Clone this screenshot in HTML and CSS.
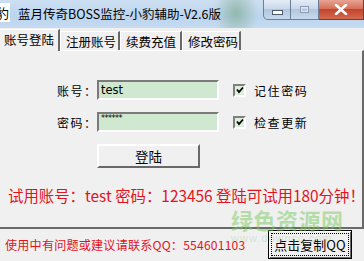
FILE: index.html
```
<!DOCTYPE html>
<html>
<head>
    <title>蓝月传奇BOSS监控-小豹辅助-V2.6版</title>
    <link rel="stylesheet" href="styles.css">
</head>
<body>
    <div class="window">
        <div class="titlebar">
            <span class="app-icon">豹</span>
            <span class="title">蓝月传奇BOSS监控-小豹辅助-V2.6版</span>
            <div class="caption">
                <span class="cap cap-min"><i></i></span>
                <span class="cap cap-max"><i></i></span>
                <span class="cap cap-close">
                    <svg width="14" height="11" viewBox="0 0 14 11"><path d="M2 1 L12 10 M12 1 L2 10" stroke="#fff" stroke-width="2.6" stroke-linecap="round"/></svg>
                </span>
            </div>
        </div>

        <div class="tabs">
            <div class="tab active">账号登陆</div>
            <div class="tab">注册账号</div>
            <div class="tab">续费充值</div>
            <div class="tab">修改密码</div>
        </div>

        <div class="panel">
            <div class="row">
                <span class="label">账号：</span>
                <div class="field">test</div>
                <span class="check"><svg width="8" height="8" viewBox="0 0 8 8"><path d="M1 3.5 L3 6 L7 1.5" fill="none" stroke="#000" stroke-width="1.8"/></svg></span>
                <span class="check-label">记住密码</span>
            </div>
            <div class="row">
                <span class="label">密码：</span>
                <div class="field field-pass">******</div>
                <span class="check"><svg width="8" height="8" viewBox="0 0 8 8"><path d="M1 3.5 L3 6 L7 1.5" fill="none" stroke="#000" stroke-width="1.8"/></svg></span>
                <span class="check-label">检查更新</span>
            </div>
            <button class="btn login">登陆</button>
            <p class="trial">试用账号：test 密码：123456 登陆可试用180分钟！</p>
        </div>

        <div class="footer">
            <span class="contact">使用中有问题或建议请联系QQ：554601103</span>
            <button class="btn copy"><span>点击复制QQ</span></button>
        </div>

        <div class="watermark">绿色资源网<small>www.downcc.com</small></div>
    </div>
</body>
</html>
```

FILE: styles.css
```
:root {
    --face: #f0f0f0;
    --shadow: #a0a0a0;
    --dark: #696969;
    --red: #e3131b;
    --cjk: "Noto Sans CJK SC", "Noto Sans", sans-serif;
}

body {
    margin: 0;
    background: var(--face);
    font-family: var(--cjk);
    color: #000;
}

.window {
    position: relative;
    width: 364px;
    height: 261px;
    overflow: hidden;
    background: var(--face);
}

/* title bar */

.titlebar {
    height: 28px;
    display: flex;
    align-items: flex-start;
    background:
        radial-gradient(ellipse 22px 30px at 236px 12px, rgba(110, 160, 120, 0.55), transparent),
        linear-gradient(#cddff2, #bcd4ee 60%, #c6dbf1);
}

.app-icon {
    width: 10px;
    height: 19px;
    margin-top: 3px;
    background: #fff;
    overflow: hidden;
    font-size: 13px;
    line-height: 19px;
    text-indent: -4px;
}

.title {
    margin-left: 8px;
    margin-top: 5px;
    font-size: 12.5px;
    line-height: 18px;
}

.caption {
    margin-left: auto;
    display: flex;
}

.cap {
    height: 19px;
    display: flex;
    align-items: center;
    justify-content: center;
    border: 1px solid #6d7f98;
    border-top: none;
    background: linear-gradient(#e4ecf6, #c9d8ea 45%, #b3c6dc 50%, #c8d9ec);
}

.cap-min {
    width: 26px;
    border-radius: 0 0 0 5px;
}

.cap-min i {
    width: 9px;
    height: 3px;
    margin-top: 6px;
    background: #fff;
    border: 1px solid #4d5c72;
}

.cap-max {
    width: 27px;
    border-left: none;
}

.cap-max i {
    width: 7px;
    height: 5px;
    border: 1px solid #8c9bb0;
    box-shadow: inset 0 0 0 1px #dfe6ef;
}

.cap-close {
    width: 44px;
    border-left: none;
    border-color: #7a3a32;
    background: linear-gradient(#e8a493, #d6705b 45%, #c4452c 50%, #d26a4f);
}

/* tabs */

.tabs {
    height: 22px;
    display: flex;
    align-items: flex-end;
    position: relative;
    z-index: 1;
}

.tab {
    height: 18px;
    padding: 0 0 0 5px;
    font-size: 12.5px;
    line-height: 19px;
    border-left: 1px solid #fff;
    border-top: 1px solid #fff;
    border-right: 2px solid var(--dark);
    box-sizing: content-box;
}

.tab:nth-child(1) { width: 54px; }
.tab:nth-child(2) { width: 52px; }
.tab:nth-child(3) { width: 54px; }
.tab:nth-child(4) { width: 51px; }

.tab.active {
    height: 21px;
    margin-bottom: -1px;
    padding-left: 4px;
    line-height: 20px;
    border-left: none;
    background: var(--face);
}

/* login panel */

.panel {
    height: 147px;
    border-top: 1px solid #fff;
    border-right: 2px solid var(--dark);
    border-bottom: 2px solid var(--dark);
    padding-top: 29px;
}

.row {
    display: flex;
    align-items: center;
    height: 20px;
    margin-bottom: 12px;
    padding-left: 57px;
}

.label {
    width: 40px;
    flex-shrink: 0;
    white-space: nowrap;
    font-size: 12px;
    letter-spacing: 1.5px;
}

.field {
    width: 116px;
    height: 16px;
    background: #cfe8cf;
    border: 2px solid;
    border-color: #7a7a7a #fff #fff #7a7a7a;
    padding-left: 2px;
    font-family: "DejaVu Sans", sans-serif;
    font-size: 11.5px;
    line-height: 17px;
}

.field-pass {
    font-size: 8px;
    line-height: 10px;
    letter-spacing: -0.5px;
}

.check {
    width: 9px;
    height: 9px;
    margin-left: 14px;
    display: flex;
    align-items: center;
    justify-content: center;
    background: #dcefdc;
    border: 2px solid;
    border-color: #808080 #fff #fff #808080;
}

.check-label {
    margin-left: 8px;
    font-size: 12px;
    letter-spacing: 1.6px;
}

.btn {
    font-family: var(--cjk);
    background: var(--face);
    border: 2px solid;
    border-color: #fff #696969 #696969 #fff;
    padding: 0;
    color: #000;
}

.login {
    display: block;
    width: 103px;
    height: 24px;
    margin: 3px 0 0 97px;
    font-size: 13.5px;
    line-height: 18px;
}

.trial {
    margin: 18px 0 0 8px;
    color: var(--red);
    font-size: 15.4px;
    line-height: 18px;
    white-space: nowrap;
}

/* footer */

.footer {
    height: 31px;
    display: flex;
    align-items: center;
    padding-left: 5px;
}

.contact {
    color: var(--red);
    font-size: 12.1px;
    letter-spacing: 0.2px;
}

.copy {
    margin-left: auto;
    margin-right: 12px;
    width: 84px;
    height: 29px;
    border: 1px solid #000;
    box-shadow: inset 1px 1px 0 #fff, inset -1px -1px 0 #696969;
    font-size: 13px;
}

.copy span {
    display: block;
    margin: 0 2px;
    border: 1px dotted #000;
    line-height: 21px;
}

/* watermark over the bottom right */

.watermark {
    position: absolute;
    left: 231px;
    top: 206px;
    color: rgba(120, 200, 95, 0.5);
    font-size: 22px;
    font-weight: bold;
    line-height: 26px;
    letter-spacing: 0.5px;
    pointer-events: none;
}

.watermark small {
    display: block;
    font-family: "Liberation Sans", sans-serif;
    font-size: 11px;
    font-weight: normal;
    line-height: 12px;
    color: rgba(150, 200, 140, 0.35);
    letter-spacing: 1px;
}
```
